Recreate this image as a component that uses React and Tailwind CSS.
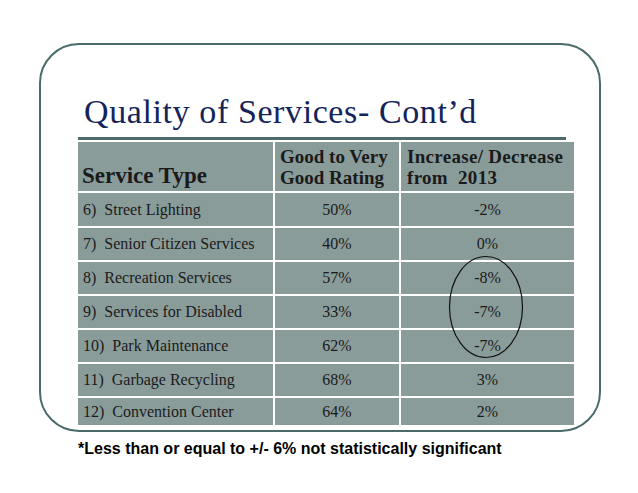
import React from "react";

const rows = [
  { name: "6)  Street Lighting", rating: "50%", change: "-2%", h: "h-[35px]" },
  { name: "7)  Senior Citizen Services", rating: "40%", change: "0%", h: "h-[34px]" },
  { name: "8)  Recreation Services", rating: "57%", change: "-8%", h: "h-[34px]" },
  { name: "9)  Services for Disabled", rating: "33%", change: "-7%", h: "h-[34px]" },
  { name: "10)  Park Maintenance", rating: "62%", change: "-7%", h: "h-[34px]" },
  { name: "11)  Garbage Recycling", rating: "68%", change: "3%", h: "h-[34px]" },
  { name: "12)  Convention Center", rating: "64%", change: "2%", h: "h-[27px]" },
];

const serif = "font-['Liberation_Serif','Times_New_Roman',serif]";

const App = () => {
  return (
    <div className="relative w-[638px] h-[493px] bg-white overflow-hidden">
      <div className="ml-[39px] mt-[43px] w-[562px] h-[389px] border-2 border-[#4b6a6a] rounded-[40px]">
        <div className="pl-[37px] pt-[50px]">
          <h1 className={`${serif} pl-[6px] text-[34px] leading-[33px] tracking-[0.6px] text-[#14245a] whitespace-nowrap`}>
            Quality of Services- Cont’d
          </h1>
          <div className="mt-[9px] w-[488px] h-[3px] bg-[#4d6b6b]"></div>
          <div className={`${serif} mt-[2px] w-[496px] bg-[#8a9c9a] text-[#1a1a1a]`}>
            <div className="flex h-[51px] border-b-2 border-white">
              <div className="w-[197px] border-r-2 border-white flex items-end pl-[4px] pb-[3px]">
                <span className="text-[23px] leading-[24px] font-bold">Service Type</span>
              </div>
              <div className="w-[126px] border-r-2 border-white flex items-end pl-[5px] pb-[3px]">
                <span className="text-[19px] leading-[21px] font-bold">
                  Good to Very
                  <br />
                  Good Rating
                </span>
              </div>
              <div className="flex-1 flex items-end pl-[6px] pb-[3px]">
                <span className="text-[19px] leading-[21px] tracking-[0.3px] font-bold whitespace-pre">
                  Increase/ Decrease
                  <br />
                  from  2013
                </span>
              </div>
            </div>
            {rows.map((r, i) => (
              <div
                key={i}
                className={`flex ${r.h} text-[16px] ${i < rows.length - 1 ? "border-b-2 border-white" : ""}`}
              >
                <div className="w-[197px] border-r-2 border-white flex items-center pl-[5px] whitespace-pre">
                  {r.name}
                </div>
                <div className="w-[126px] border-r-2 border-white flex items-center justify-center">
                  {r.rating}
                </div>
                <div className="flex-1 flex items-center justify-center">{r.change}</div>
              </div>
            ))}
          </div>
        </div>
      </div>
      <p className="ml-[78px] mt-[8px] font-['Liberation_Sans',Arial,sans-serif] font-bold text-[16px] leading-[18px] text-black">
        *Less than or equal to +/- 6% not statistically significant
      </p>
      <svg className="absolute left-[448px] top-[255px]" width="76" height="104" viewBox="0 0 76 104">
        <ellipse cx="38" cy="52" rx="36.5" ry="50.5" fill="none" stroke="#111" strokeWidth="1.2" />
      </svg>
    </div>
  );
};

export default App;
